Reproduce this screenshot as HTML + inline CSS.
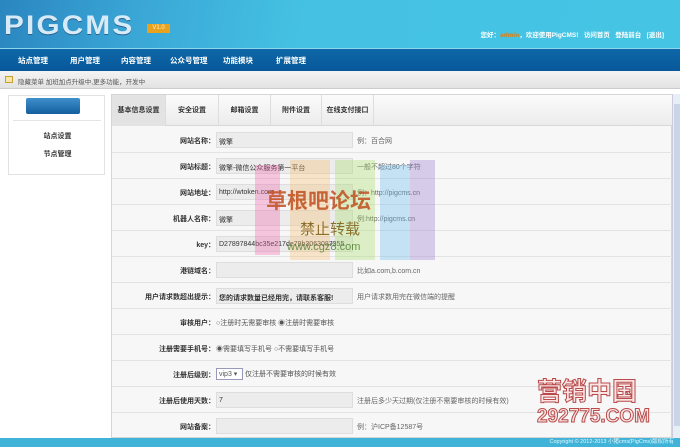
<!DOCTYPE html>
<html><head><meta charset="utf-8"><style>
*{margin:0;padding:0;box-sizing:border-box}
body{width:680px;height:447px;overflow:hidden;background:#fff;font-family:"Liberation Sans","Noto Sans CJK SC",sans-serif;font-size:7px;color:#333;position:relative}
.hd{position:absolute;left:0;top:0;width:680px;height:48px;background:linear-gradient(100deg,#2a86c0 0%,#3aa6d6 20%,#45c2e3 45%,#45c4e4 100%)}
.logo{position:absolute;left:4px;top:10px;font:bold 27px "Liberation Sans",sans-serif;letter-spacing:2px;color:#d6ebf7;text-shadow:0 1px 0 #2a5f8a;transform:scaleX(1.1);transform-origin:left}
.ver{position:absolute;left:147px;top:24px;width:23px;height:9px;background:#e9a21e;color:#fff3c0;font-size:6px;text-align:center;line-height:9px}
.tr{position:absolute;right:16px;top:29px;color:#fff;font-size:6.5px;font-weight:bold}
.tr b{color:#c9852a}
.nav{position:absolute;left:0;top:48px;width:680px;height:23px;background:linear-gradient(#0e68a8,#07579a);border-top:1px solid #8fd4ee}
.nav span{position:absolute;top:6px;color:#fff;font-size:7.5px;font-weight:bold}
.bar{position:absolute;left:0;top:71px;width:680px;height:18px;background:linear-gradient(#f4f4f4,#e2e2e2);border-bottom:1px solid #ccc;color:#555;font-size:6.5px;padding:5px 0 0 18px}
.bar i{position:absolute;left:5px;top:5px;width:8px;height:7px;border:1px solid #c9a030;background:#f7e7a8}
.side{position:absolute;left:8px;top:95px;width:97px;height:80px;background:#fff;border:1px solid #e2e2e2}
.side .btn{position:absolute;left:17px;top:2px;width:54px;height:16px;background:linear-gradient(#3f8fcd,#14609f);border-radius:2px}
.side .l{position:absolute;left:4px;width:88px;border-top:1px solid #e5e5e5}
.side p{position:absolute;width:97px;text-align:center;font-weight:bold;color:#333;font-size:7px}
.main{position:absolute;left:111px;top:94px;width:561px;height:344px;border:1px solid #d5d5d5;background:#f7f7f7}
.tabs{position:absolute;left:0;top:0;width:561px;height:31px;background:linear-gradient(#fbfbfb,#ececec);border-bottom:1px solid #d8d8d8}
.tabs span{position:absolute;top:0;height:31px;line-height:31px;text-align:center;font-size:7px;font-weight:bold;color:#333;border-right:1px solid #ddd}
.row{position:absolute;left:0;width:561px;height:26px;border-bottom:1px solid #e3e3e3}
.row .lb{position:absolute;right:458px;top:9px;font-weight:bold;white-space:nowrap}
.row .in{position:absolute;left:104px;top:5px;width:137px;height:16px;background:#ececec;border:1px solid #ddd;padding:4px 2px;white-space:nowrap;overflow:hidden}
.row .h{position:absolute;left:245px;top:9px;color:#666;white-space:nowrap}
.row .t{position:absolute;left:104px;top:9px;color:#555;white-space:nowrap}
.sb{position:absolute;left:672px;top:94px;width:8px;height:344px;background:#e8eef6;border-left:1px solid #ccd}
.sb i{position:absolute;left:1px;top:10px;width:6px;height:322px;background:#c9d6ea}
.ft{position:absolute;left:0;top:438px;width:680px;height:9px;background:#3fb4d8;color:#e5f6fb;font-size:5.5px;text-align:right;padding-right:6px;line-height:9px}
.wm{position:absolute;opacity:.35}
</style></head><body>
<div class="hd"><div class="logo">PIGCMS</div><div class="ver">V1.0</div>
<div class="tr">您好：<b>admin</b>，欢迎使用PigCMS!&nbsp;&nbsp; 访问首页&nbsp;&nbsp; 登陆前台&nbsp;&nbsp; [退出]</div></div>
<div class="nav"><span style="left:18px">站点管理</span><span style="left:70px">用户管理</span><span style="left:121px">内容管理</span><span style="left:170px">公众号管理</span><span style="left:223px">功能模块</span><span style="left:276px">扩展管理</span></div>
<div class="bar"><i></i>隐藏菜单 加班加点升级中,更多功能，开发中</div>
<div class="side"><div class="btn"></div><div class="l" style="top:24px"></div><p style="top:35px">站点设置</p><p style="top:53px">节点管理</p></div>
<div class="main">
<div class="tabs"><span style="left:0;width:54px;background:#e3e3e3">基本信息设置</span><span style="left:54px;width:53px">安全设置</span><span style="left:107px;width:52px">邮箱设置</span><span style="left:159px;width:51px">附件设置</span><span style="left:210px;width:52px">在线支付接口</span></div>
<div class="row" style="top:32px"><span class="lb">网站名称：</span><div class="in">微擎</div><span class="h">例：百合网</span></div>
<div class="row" style="top:58px"><span class="lb">网站标题：</span><div class="in">微擎-微信公众服务第一平台</div><span class="h">一般不超过80个字符</span></div>
<div class="row" style="top:84px"><span class="lb">网站地址：</span><div class="in">http://wtoken.com</div><span class="h">例：http://pigcms.cn</span></div>
<div class="row" style="top:110px"><span class="lb">机器人名称：</span><div class="in">微擎</div><span class="h">例:http://pigcms.cn</span></div>
<div class="row" style="top:136px"><span class="lb">key：</span><div class="in">D27897844bc35e217de79b3063087355</div></div>
<div class="row" style="top:162px"><span class="lb">港链域名：</span><div class="in"></div><span class="h">比如a.com,b.com.cn</span></div>
<div class="row" style="top:188px"><span class="lb">用户请求数超出提示：</span><div class="in" style="font-weight:bold">您的请求数量已经用完，请联系客服!</div><span class="h">用户请求数用完在微信端的提醒</span></div>
<div class="row" style="top:214px"><span class="lb">审核用户：</span><span class="t">○注册时无需要审核 ◉注册时需要审核</span></div>
<div class="row" style="top:240px"><span class="lb">注册需要手机号：</span><span class="t">◉需要填写手机号 ○不需要填写手机号</span></div>
<div class="row" style="top:266px"><span class="lb">注册后级别：</span><span class="t" style="top:7px"><span style="display:inline-block;border:1px solid #99b;background:#fff;padding:1px 2px;width:27px">vip3 ▾</span> 仅注册不需要审核的时候有效</span></div>
<div class="row" style="top:292px"><span class="lb">注册后使用天数：</span><div class="in">7</div><span class="h">注册后多少天过期(仅注册不需要审核的时候有效)</span></div>
<div class="row" style="top:318px"><span class="lb">网站备案：</span><div class="in"></div><span class="h">例：沪ICP备12587号</span></div>
</div>
<div class="sb"><i></i></div>
<div class="wm" style="left:255px;top:165px;width:25px;height:90px;background:#ee66aa"></div>
<div class="wm" style="left:290px;top:160px;width:40px;height:100px;background:#f7c070"></div>
<div class="wm" style="left:335px;top:160px;width:40px;height:100px;background:#aadd66"></div>
<div class="wm" style="left:380px;top:165px;width:30px;height:95px;background:#66bbee"></div>
<div class="wm" style="left:410px;top:160px;width:25px;height:100px;background:#9977cc"></div>
<div style="position:absolute;left:266px;top:185px;font-size:21px;font-weight:bold;color:#c05020;opacity:.85;font-family:'Noto Sans CJK SC',sans-serif">草根吧论坛</div>
<div style="position:absolute;left:300px;top:218px;font-size:15px;color:#7a5a10;opacity:.85;font-family:'Noto Sans CJK SC',sans-serif">禁止转载</div>
<div style="position:absolute;left:287px;top:241px;font-size:11px;color:#4a7a2a;opacity:.8">www.cgz8.com</div>
<div style="position:absolute;left:537px;top:372px;font-size:25px;font-weight:bold;color:#fbe4e4;-webkit-text-stroke:1px #b84a4a;font-family:'Noto Sans CJK SC',sans-serif">营销中国</div>
<div style="position:absolute;left:537px;top:406px;font-size:19px;font-weight:bold;color:#fbe4e4;-webkit-text-stroke:1px #b84a4a">292775.COM</div>
<div class="ft">Copyright © 2012-2013 小猪cms(PigCms)版权所有</div>
</body></html>
